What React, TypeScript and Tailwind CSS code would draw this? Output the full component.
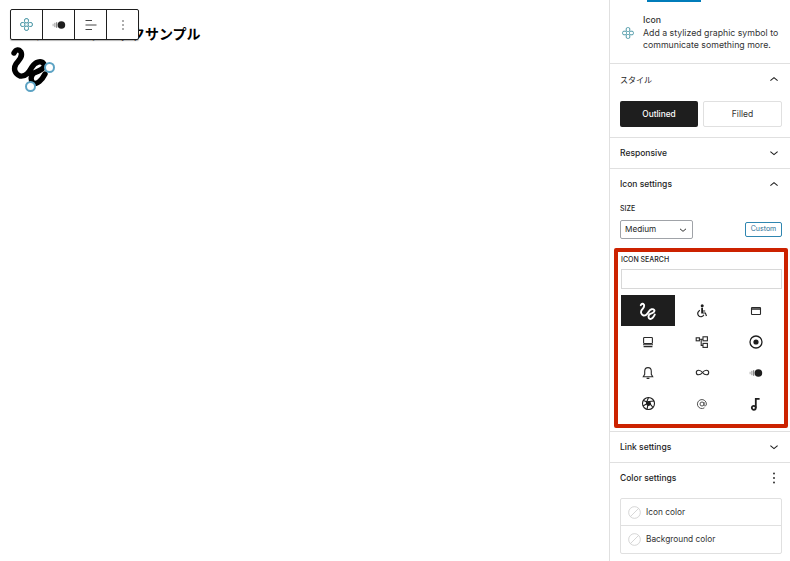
const sans = "font-['Inter','Noto_Sans_CJK_JP',sans-serif]";

function Chevron({ up = false, size = 12 }: { up?: boolean; size?: number }) {
  return (
    <svg width={size} height={size} viewBox="0 0 12 12" fill="none" stroke="#1e1e1e" strokeWidth="1.1">
      <path d={up ? "M2.400 7.600 6 4.600l3.600 3" : "M2.400 4.600 6 7.600l3.600-3"} />
    </svg>
  );
}

function BlockGlyph({ size = 13 }: { size?: number }) {
  return (
    <svg width={size} height={size} viewBox="0 0 16 16" fill="none" stroke="#3d8f9f" strokeWidth="1.2">
      <rect x="5.600" y="0.800" width="4.800" height="5.200" rx="1.800" />
      <rect x="5.600" y="10" width="4.800" height="5.200" rx="1.800" />
      <rect x="0.800" y="5.600" width="5.200" height="4.800" rx="1.800" />
      <rect x="10" y="5.600" width="5.200" height="4.800" rx="1.800" />
    </svg>
  );
}

function Scribble({ size, color, width }: { size: number; color: string; width: number }) {
  return (
    <svg width={size} height={size} viewBox="0 0 40 40" fill="none" stroke={color} strokeWidth={width} strokeLinecap="round" strokeLinejoin="round">
      <path d="M4 7C6 3 9 3 11 6c2 5-2 8-5 12-3 5-1 10 4 12 6 1 9-4 12-9 3-5 9-7 12-3 2 4-5 7-10 9-3 2-4 7-1 10 4 2 9-3 12-9" />
    </svg>
  );
}

function ContrastDot() {
  return (
    <svg width="16" height="12" viewBox="0 0 16 12" fill="#1e1e1e">
      <circle cx="10.400" cy="6" r="3.800" />
      <rect x="5.200" y="3.200" width="1" height="5.600" opacity=".65" />
      <rect x="3.400" y="3.800" width="1" height="4.400" opacity=".5" />
      <rect x="1.600" y="4.800" width="1" height="2.400" opacity=".35" />
    </svg>
  );
}

function PanelHeader({ title, up, dots, className = "text-[8.5px] font-medium" }: { title: string; up?: boolean; dots?: boolean; className?: string }) {
  return (
    <div className="flex h-[30px] items-center justify-between pl-[10px] pr-[10px]">
      <span className={`${className} text-[#1e1e1e]`}>{title}</span>
      {dots ? (
        <svg width="12" height="14" viewBox="0 0 12 14" fill="#1e1e1e">
          <circle cx="6" cy="2.500" r=".9" />
          <circle cx="6" cy="7" r=".9" />
          <circle cx="6" cy="11.500" r=".9" />
        </svg>
      ) : (
        <Chevron up={up} />
      )}
    </div>
  );
}

function NoColor() {
  return (
    <svg width="13" height="13" viewBox="0 0 14 14" fill="none" stroke="#c8c8c8" strokeWidth="0.8">
      <circle cx="7" cy="7" r="6.300" />
      <path d="M2.600 11.400 11.400 2.600" />
    </svg>
  );
}

const stroke = { fill: "none", stroke: "#2a2a2a", strokeWidth: 1.1 };

const icons = [
  <Scribble size={18} color="#ffffff" width={4.2} />,
  <svg width="14" height="14" viewBox="0 0 14 14" fill="#1e1e1e">
    <circle cx="7.200" cy="1.800" r="1.500" />
    <path d="M6.200 3.800H8v2.600h2.200v1.200H8v.8h2.800l1.200 3.400-1.100.4-.9-2.600H6.200z" />
    <path d="M5 5.800v1.300a2.600 2.600 0 1 0 3.400 3.300l1 .7A3.800 3.800 0 1 1 5 5.800z" />
  </svg>,
  <svg width="14" height="14" viewBox="0 0 14 14" {...stroke}>
    <rect x="2.500" y="3.500" width="9" height="7" rx=".6" />
    <path d="M2.500 5h9" strokeWidth="1.500" />
  </svg>,
  <svg width="14" height="14" viewBox="0 0 14 14" {...stroke}>
    <rect x="2.600" y="2.500" width="8.800" height="6" rx=".8" />
    <path d="M2 9.800h10M2.600 11.600h8.800" />
  </svg>,
  <svg width="14" height="14" viewBox="0 0 14 14" {...stroke}>
    <rect x="1.200" y="2.800" width="3.200" height="3" />
    <rect x="8" y="1.800" width="4.400" height="4" />
    <rect x="8" y="8.400" width="4.400" height="4" />
    <path d="M4.400 4.200H8M6.200 4.200v6.200H8" />
  </svg>,
  <svg width="16" height="16" viewBox="0 0 16 16">
    <circle cx="8" cy="8" r="6" fill="none" stroke="#1e1e1e" strokeWidth="1.300" />
    <circle cx="8" cy="8" r="2.600" fill="#1e1e1e" />
  </svg>,
  <svg width="14" height="14" viewBox="0 0 14 14" {...stroke}>
    <path d="M7 1.600c-2.300 0-3.300 1.700-3.300 3.800v3L2.300 10.800h9.400l-1.400-2.400v-3c0-2.100-1-3.800-3.300-3.800zM5.600 12.400h2.800" />
  </svg>,
  <svg width="15" height="15" viewBox="0 0 15 15" {...stroke}>
    <path d="M7.500 7.500C6.400 6 5 5.200 3.600 5.200a2.300 2.300 0 0 0 0 4.600c1.400 0 2.800-.8 3.900-2.300s2.500-2.300 3.900-2.300a2.300 2.300 0 0 1 0 4.600c-1.400 0-2.800-.8-3.900-2.300z" />
  </svg>,
  <ContrastDot />,
  <svg width="15" height="15" viewBox="0 0 15 15" fill="none" stroke="#1e1e1e" strokeWidth="1.100">
    <circle cx="7.500" cy="7.500" r="6" />
    <path d="M7.500 1.500 5.300 7M13 5l-5 .5M12 11.500 8.700 7.400M6 13.300l1-5M2 10l4.300-2.500M2 4.200l4.500 2" />
    <circle cx="7.500" cy="7.500" r="1.900" fill="#1e1e1e" />
  </svg>,
  <svg width="14" height="14" viewBox="0 0 14 14" fill="none" stroke="#555" strokeWidth="1">
    <circle cx="7" cy="7" r="2" />
    <path d="M9 5v3c0 1.500 2.400 1.400 2.400-1A4.500 4.500 0 1 0 9.400 10.800" />
  </svg>,
  <svg width="14" height="14" viewBox="0 0 14 14" fill="none" stroke="#1e1e1e" strokeWidth="1.800">
    <circle cx="4.800" cy="10.800" r="2" />
    <path d="M6.800 10.800V1.800h3.800" />
  </svg>,
];

export default function App() {
  return (
    <div className={`${sans} flex h-[561px] w-[790px] overflow-hidden bg-white text-[#1e1e1e]`}>
      <main className="relative flex-1 pl-[34px] pt-[25px]">
        <h1 className="text-[14px] font-bold leading-[17px] text-black">アイコンブロックサンプル</h1>
        <div className="relative -ml-[24px] mt-[4px] h-[44px] w-[44px]">
          <Scribble size={40} color="#000000" width={5.400} />
          <span className="absolute left-[34px] top-[16px] h-[11px] w-[11px] rounded-full border-2 border-[#5da3c4] bg-white" />
          <span className="absolute left-[15px] top-[35px] h-[11px] w-[11px] rounded-full border-2 border-[#5da3c4] bg-white" />
        </div>
        <div className="absolute left-[10px] top-[9px] flex h-[31px] rounded-[2px] border border-[#1e1e1e] bg-white shadow-[0_1px_1px_rgba(0,0,0,0.3)]">
          <div className="flex w-[32px] items-center justify-center border-r border-[#1e1e1e]">
            <BlockGlyph />
          </div>
          <div className="flex w-[32px] items-center justify-center border-r border-[#1e1e1e]">
            <ContrastDot />
          </div>
          <div className="flex w-[32px] items-center justify-center border-r border-[#1e1e1e]">
            <svg width="14" height="14" viewBox="0 0 14 14" stroke="#333" strokeWidth="0.9">
              <path d="M1.500 2.500h6.500M1.500 7h11M1.500 11.500h6.500" />
            </svg>
          </div>
          <div className="flex w-[31px] items-center justify-center">
            <svg width="12" height="14" viewBox="0 0 12 14" fill="#1e1e1e">
              <circle cx="6" cy="3" r=".7" />
              <circle cx="6" cy="7" r=".7" />
              <circle cx="6" cy="11" r=".7" />
            </svg>
          </div>
        </div>
      </main>

      <aside className="w-[181px] shrink-0 border-l border-[#e0e0e0]">
        <div className="ml-[37px] h-[2px] w-[54px] bg-[#007cba]" />

        <section className="flex h-[62px] gap-[9px] border-b border-[#e0e0e0] pl-[12px] pt-[12px]">
          <div className="pt-[13px]">
            <BlockGlyph size={12} />
          </div>
          <div className="text-[8.750px] leading-[12px] text-[#333]">
            <p className="font-medium">Icon</p>
            <p className="mt-[1px] whitespace-nowrap">Add a stylized graphic symbol to</p>
            <p className="whitespace-nowrap">communicate something more.</p>
          </div>
        </section>

        <section className="border-b border-[#e0e0e0] pb-[10px]">
          <PanelHeader title="スタイル" up className="mt-[1px] text-[8px] font-normal" />
          <div className="mt-[7px] flex gap-[5px] pl-[10px]">
            <button className="h-[26px] w-[78px] rounded-[2px] bg-[#1e1e1e] text-[8.300px] font-medium text-white">Outlined</button>
            <button className="h-[26px] w-[79px] rounded-[2px] border border-[#e0e0e0] text-[8.500px] text-[#333]">Filled</button>
          </div>
        </section>

        <section className="border-b border-[#e0e0e0]">
          <PanelHeader title="Responsive" />
        </section>

        <section>
          <PanelHeader title="Icon settings" up className="mt-[1px] text-[8.500px] font-medium" />
          <div className="mt-[5px] pl-[10px] pr-[8px]">
            <p className="text-[7px] font-medium uppercase leading-[10px]">Size</p>
            <div className="mt-[6px] flex items-center justify-between">
              <div className="flex h-[19px] w-[73px] items-center justify-between rounded-[2px] border border-[#a0a3a8] pl-[4px] pr-[4px] text-[8.200px]">
                Medium
                <Chevron size={10} />
              </div>
              <div className="flex h-[15px] w-[37px] items-center justify-center rounded-[2px] border border-[#2f86b0] text-[7px] text-[#1f6f96]">Custom</div>
            </div>
          </div>
        </section>

        <section className="ml-[4px] mr-[2px] mt-[9px] h-[180px] rounded-[2px] border-4 border-[#cc2200] bg-white px-[3px] pt-[3px]">
          <p className="text-[7px] font-medium uppercase leading-[10px]">Icon search</p>
          <div className="mt-[4px] h-[20px] w-[161px] border border-[#d8d8d8]" />
          <div className="mt-[6px] grid w-[162px] grid-cols-3 grid-rows-[31px_31px_31px_31px]">
            {icons.map((icon, i) => (
              <div key={i} className={`flex items-center justify-center ${i === 0 ? "bg-[#1e1e1e]" : ""}`}>
                {icon}
              </div>
            ))}
          </div>
        </section>

        <section className="mt-[3px] border-y border-[#e0e0e0]">
          <PanelHeader title="Link settings" />
        </section>

        <section>
          <PanelHeader title="Color settings" dots />
          <div className="ml-[10px] mr-[8px] mt-[5px] rounded-[2px] border border-[#e0e0e0] text-[8.300px] text-[#333]">
            <div className="flex h-[27px] items-center gap-[5px] border-b border-[#e0e0e0] pl-[7px]">
              <NoColor />
              Icon color
            </div>
            <div className="flex h-[27px] items-center gap-[5px] pl-[7px]">
              <NoColor />
              Background color
            </div>
          </div>
        </section>
      </aside>
    </div>
  );
}
